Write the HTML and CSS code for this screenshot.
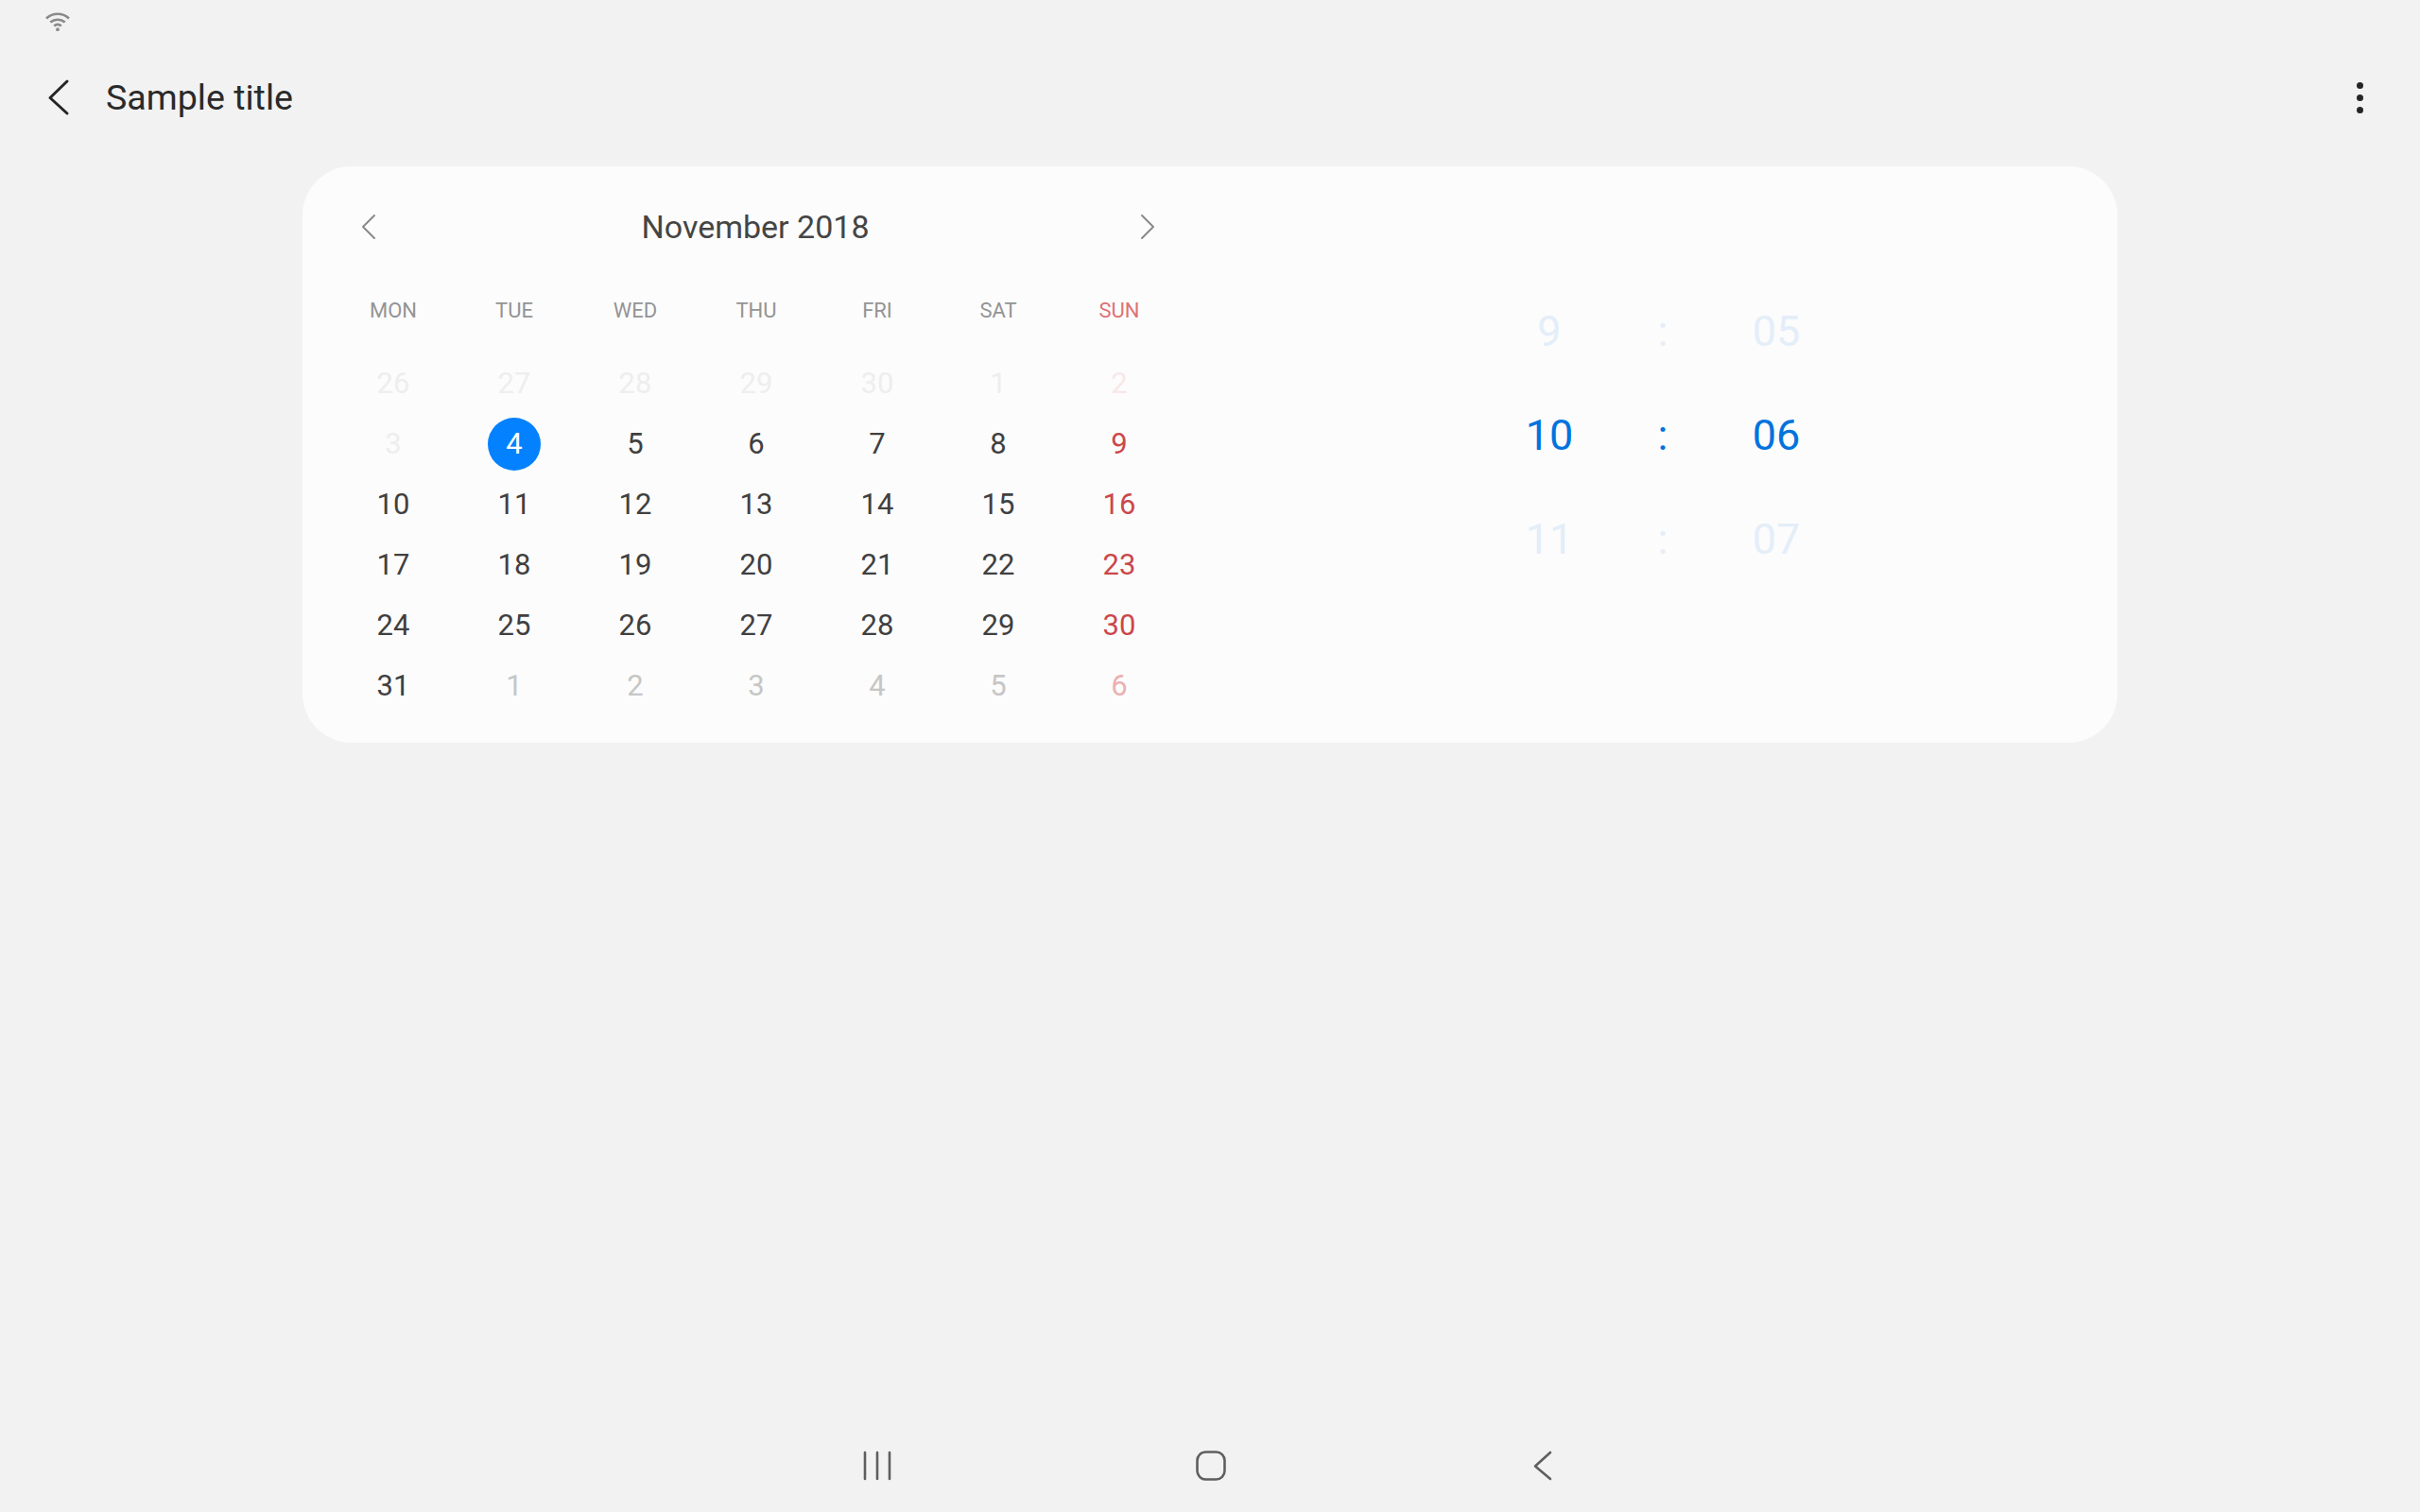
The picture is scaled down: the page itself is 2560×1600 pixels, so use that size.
FILE: index.html
```html
<!DOCTYPE html>
<html lang="en">
<head>
    <meta charset="UTF-8">
    <title>Sample title</title>
    <link rel="stylesheet" href="styles.css">
</head>
<body>
    <div class="page">
        <div class="status-bar">
            <svg class="wifi" width="28" height="22" viewBox="0 0 28 22" fill="none" stroke="#8a8a8a" stroke-width="2.6">
                <path d="M2 7.5C9 1.2 19 1.2 26 7.5"/>
                <path d="M6.3 11.6C10.8 7.8 17.2 7.8 21.7 11.6"/>
                <path d="M10.2 15.4C12.5 13.6 15.5 13.6 17.8 15.4"/>
                <circle cx="14" cy="19.2" r="1.9" fill="#8a8a8a" stroke="none"/>
            </svg>
        </div>

        <header class="app-bar">
            <svg class="back" width="24" height="40" viewBox="0 0 24 40" fill="none" stroke="#252525" stroke-width="3" stroke-linecap="round" stroke-linejoin="round">
                <path d="M21 3L3 20.5L21 37"/>
            </svg>
            <h1 class="title">Sample title</h1>
            <div class="more">
                <span class="dot"></span>
                <span class="dot"></span>
                <span class="dot"></span>
            </div>
        </header>

        <main class="card">
            <section class="calendar">
                <div class="month-head">
                    <svg width="16" height="28" viewBox="0 0 16 28" fill="none" stroke="#8a8a8a" stroke-width="2" stroke-linecap="round" stroke-linejoin="round">
                        <path d="M14 2L2 14L14 26"/>
                    </svg>
                    <div class="month-name">November 2018</div>
                    <svg width="16" height="28" viewBox="0 0 16 28" fill="none" stroke="#8a8a8a" stroke-width="2" stroke-linecap="round" stroke-linejoin="round">
                        <path d="M2 2L14 14L2 26"/>
                    </svg>
                </div>

                <div class="weekdays">
                    <span>MON</span><span>TUE</span><span>WED</span><span>THU</span><span>FRI</span><span>SAT</span><span class="sun">SUN</span>
                </div>

                <div class="days">
                    <span class="faint">26</span><span class="faint">27</span><span class="faint">28</span><span class="faint">29</span><span class="faint">30</span><span class="faint">1</span><span class="faint-red">2</span>
                    <span class="faint">3</span><span><b class="selected">4</b></span><span>5</span><span>6</span><span>7</span><span>8</span><span class="red">9</span>
                    <span>10</span><span>11</span><span>12</span><span>13</span><span>14</span><span>15</span><span class="red">16</span>
                    <span>17</span><span>18</span><span>19</span><span>20</span><span>21</span><span>22</span><span class="red">23</span>
                    <span>24</span><span>25</span><span>26</span><span>27</span><span>28</span><span>29</span><span class="red">30</span>
                    <span>31</span><span class="other">1</span><span class="other">2</span><span class="other">3</span><span class="other">4</span><span class="other">5</span><span class="other-red">6</span>
                </div>
            </section>

            <section class="time-picker">
                <span class="dim">9</span><span class="dim">:</span><span class="dim">05</span>
                <span>10</span><span>:</span><span>06</span>
                <span class="dim">11</span><span class="dim">:</span><span class="dim">07</span>
            </section>
        </main>

        <nav class="nav-bar">
            <svg width="32" height="32" viewBox="0 0 32 32" fill="none" stroke="#5f5f5f" stroke-width="2.6" stroke-linecap="round">
                <path d="M3 2V30M16 2V30M29 2V30"/>
            </svg>
            <svg width="32" height="32" viewBox="0 0 32 32" fill="none" stroke="#5f5f5f" stroke-width="2.6">
                <rect x="1.5" y="1.5" width="29" height="29" rx="9"/>
            </svg>
            <svg width="32" height="32" viewBox="0 0 32 32" fill="none" stroke="#5f5f5f" stroke-width="2.6" stroke-linecap="round" stroke-linejoin="round">
                <path d="M23 2L7 16.5L23 30"/>
            </svg>
        </nav>
    </div>
</body>
</html>
```

FILE: styles.css
```css
* {
    box-sizing: border-box;
}

body {
    margin: 0;
    background-color: #f2f2f2;
    font-family: Roboto, "Liberation Sans", sans-serif;
}

.page {
    display: flex;
    flex-direction: column;
    height: 1600px;
}

.status-bar {
    height: 48px;
    padding: 12px 0 0 47px;
}

.wifi {
    display: block;
}

.app-bar {
    display: flex;
    align-items: center;
    height: 110px;
    padding: 8px 60px 0 50px;
    margin-top: -4px;
}

.title {
    margin: 0 0 0 38px;
    font-size: 37.6px;
    font-weight: 400;
    color: #2a2a2a;
}

.more {
    display: flex;
    flex-direction: column;
    gap: 6px;
    margin-left: auto;
}

.dot {
    width: 7px;
    height: 7px;
    border-radius: 50%;
    background-color: #252525;
}

.card {
    display: flex;
    align-items: flex-start;
    width: 1920px;
    height: 610px;
    margin: 22px 0 0 320px;
    padding: 32px 32px 0;
    background-color: #fcfcfc;
    border-radius: 52px;
}

.calendar {
    width: 896px;
}

.month-head {
    display: flex;
    align-items: center;
    justify-content: space-between;
    height: 64px;
    padding: 0 26px 0 30px;
}

.month-name {
    margin-right: 6px;
    font-size: 34px;
    color: #454545;
}

.weekdays,
.days {
    display: grid;
    grid-template-columns: repeat(7, 128px);
    text-align: center;
}

.weekdays {
    height: 48px;
    margin-top: 33px;
    font-size: 22px;
    line-height: 48px;
    color: #949494;
}

.weekdays .sun {
    color: #de7276;
}

.days {
    grid-auto-rows: 64px;
    margin-top: 21px;
    font-size: 31px;
    line-height: 64px;
    color: #404040;
}

.days .faint {
    color: #eeeeee;
}

.days .faint-red {
    color: #f7e8e9;
}

.days .other {
    color: #c6c6c6;
}

.days .other-red {
    color: #ebb0b1;
}

.days .red {
    color: #cb474b;
}

.selected {
    display: inline-block;
    width: 56px;
    height: 56px;
    border-radius: 50%;
    background-color: #0381fe;
    color: white;
    font-weight: 400;
    line-height: 56px;
}

.time-picker {
    display: grid;
    grid-template-columns: repeat(3, 120px);
    grid-auto-rows: 110px;
    margin: 88px 0 0 331px;
    text-align: center;
    font-size: 45px;
    line-height: 110px;
    color: #0073de;
}

.time-picker .dim {
    color: #e4eef9;
}

.nav-bar {
    display: grid;
    grid-template-columns: repeat(3, 32px);
    justify-content: space-between;
    width: 737px;
    margin: auto 0 33px 912px;
}

.nav-bar svg {
    display: block;
}
```
